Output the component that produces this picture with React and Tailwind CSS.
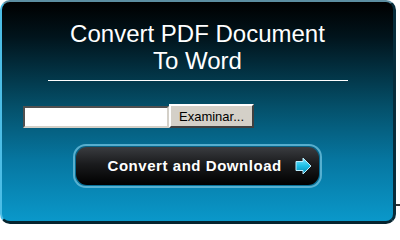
export default function App() {
  return (
    <div className="flex w-[400px] h-[227px] bg-white font-['Liberation_Sans',Arial,sans-serif]">
      <div className="w-[396px] h-[224px] shrink-0 rounded-[10px] border-l-2 border-t-2 border-r-[3px] border-b-[3px] border-l-[#4cbde6] border-t-[#5c8da0] border-r-[#062c3a] border-b-[#05242f] bg-[linear-gradient(to_bottom,#000000_0%,#01141c_16%,#04506a_48%,#0676a0_72%,#0a98ca_100%)] flex flex-col items-center">
        <h1 className="mt-[18px] text-center text-white text-[24px] leading-[27px] font-normal">
          Convert PDF Document
          <br />
          To Word
        </h1>
        <div className="mt-[6px] w-[300px] h-px bg-white" />

        <div className="mt-[23px] self-start ml-[21px] flex items-end">
          <div className="w-[146px] h-[22px] bg-white border-2 border-t-[#505050] border-l-[#505050] border-b-[#d4d0c8] border-r-[#d4d0c8]" />
          <button className="w-[85px] h-[24px] bg-[#d4d0c8] border-2 border-t-white border-l-white border-b-[#404040] border-r-[#404040] text-[13px] leading-none text-black flex items-center justify-center">
            Examinar...
          </button>
        </div>

        <div className="mt-[16px] ml-[-1px] rounded-[13px] border-2 border-[#6cc2e0]/80 p-px bg-[#0a5574]/40">
          <button className="w-[243px] h-[38px] rounded-[11px] bg-[linear-gradient(to_bottom,#3a3c40_0%,#1a1b1d_45%,#000000_100%)] flex items-center pl-[32px] text-white text-[15px] font-bold tracking-[0.55px]">
            <span>Convert and Download</span>
            <svg className="ml-[13px]" width="17" height="18" viewBox="0 0 17 18">
              <defs>
                <linearGradient id="ar" x1="0" y1="0" x2="0" y2="1">
                  <stop offset="0" stopColor="#7fe6ff" />
                  <stop offset="0.5" stopColor="#1cbfe6" />
                  <stop offset="1" stopColor="#0a86b0" />
                </linearGradient>
              </defs>
              <path d="M1 4.5 H8 V1 L16 9 L8 17 V13.5 H1 Z" fill="url(#ar)" stroke="#bdefff" strokeWidth="1" strokeLinejoin="round" />
            </svg>
          </button>
        </div>
      </div>
      <div className="mt-[204px] w-[4px] h-[2px] bg-[#333]" />
    </div>
  );
}
